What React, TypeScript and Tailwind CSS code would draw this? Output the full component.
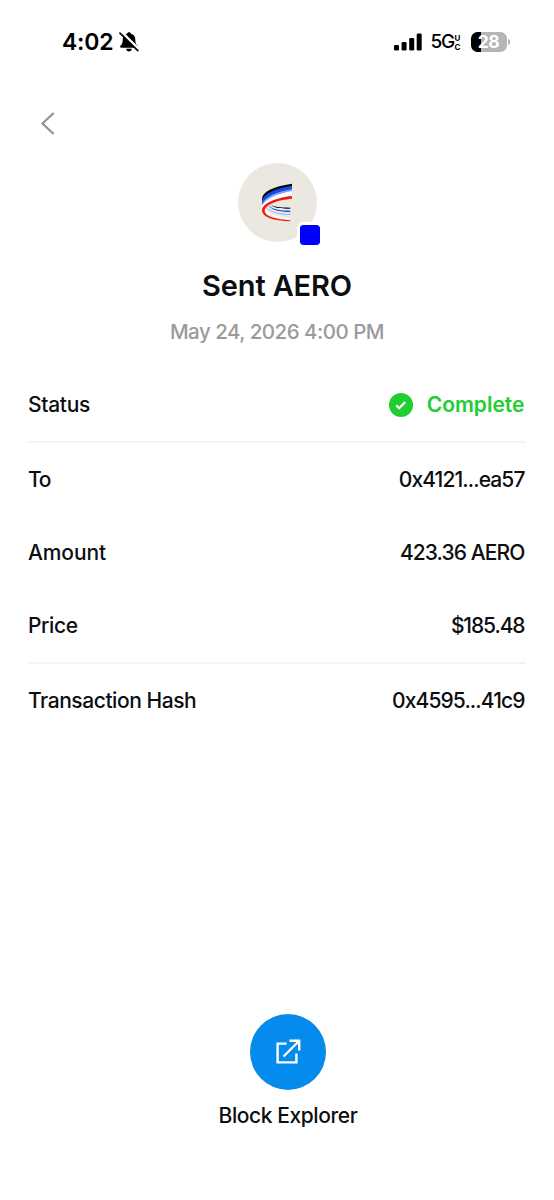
import type { ReactNode } from "react";

function StatusBar() {
  return (
    <header className="flex h-[83px] w-full items-center justify-between pl-[62px] pr-[44px]">
      <div className="flex items-center gap-[5px]">
        <span className="w-[52px] whitespace-nowrap text-[23px] font-semibold leading-7 tracking-[-0.2px] text-black">4:02</span>
        <svg width="20" height="20" viewBox="0 0 20 20">
          <path d="M10 .3c1 0 1.800.6 2 1.500 2.900.8 4.300 2.900 4.300 5.700 0 3.700.7 4.700 2.300 6.300.7.800.2 1.900-.8 1.900H2.200c-1 0-1.500-1.100-.8-1.900C3 12.200 3.700 11.200 3.700 7.500c0-2.800 1.400-4.900 4.300-5.700C8.200.9 9 .3 10 .3ZM7.200 16.700h5.600c-.2 1.700-1.300 2.800-2.800 2.800s-2.600-1.100-2.800-2.800Z" fill="#000" />
          <path d="M2.500.5 20 17.800" stroke="#fff" strokeWidth="3.400" />
          <path d="M1 1.200 18.800 18.600" stroke="#000" strokeWidth="1.700" strokeLinecap="round" />
        </svg>
      </div>
      <div className="flex items-center">
        <svg width="28" height="18" viewBox="0 0 28 18">
          <rect x="0" y="12" width="5" height="5.500" rx="1.300" />
          <rect x="7.600" y="9" width="5" height="8.500" rx="1.300" />
          <rect x="15.200" y="5" width="5" height="12.500" rx="1.300" />
          <rect x="22.700" y="0.500" width="5" height="17" rx="1.300" />
        </svg>
        <span className="ml-[9px] w-[22px] whitespace-nowrap text-[19px] font-medium leading-5 tracking-[-1.200px] text-black">5G</span>
        <span className="ml-[2px] flex w-[7px] flex-col text-[8px] font-bold leading-[10px] text-black">
          <span className="h-[9px]">U</span>
          <span className="h-[9px]">C</span>
        </span>
        <div className="ml-[9px] flex items-center gap-[1.500px]">
          <div className="flex h-5 w-[36px] items-center justify-center overflow-hidden rounded-[6.500px] bg-[linear-gradient(to_right,#000_28%,#b5b5b5_28%)]">
            <span className="text-[17.500px] font-bold leading-5 tracking-[-0.4px] text-white">28</span>
          </div>
          <div className="h-[6px] w-[2px] rounded-r-full bg-[#b5b5b5]" />
        </div>
      </div>
    </header>
  );
}

function TokenIcon() {
  return (
    <div className="relative h-[79px] w-[79px]">
      <svg width="79" height="79" viewBox="39 25 237 237" fill="none">
        <circle cx="157.500" cy="143.500" r="118.500" fill="#ebe8e1" />
        <path d="M111 132C112 112 143 95 201 87V95C151 104 121 119 111 140Z" fill="#05070d" />
        <path d="M111 137C120 116 151 101 201 94V105C153 113 119 130 111 150Z" fill="#174be8" />
        <path d="M112 146C125 126 154 111 201 104V110C154 118 124 132 112 153Z" fill="#7fa1ff" />
        <path d="M112 153C125 132 154 118 201 110V124C154 130 125 143 112 163Z" fill="#fff" />
        <path d="M134 149C147 157 166 159 196 159V162C166 163 146 160 134 149Z" fill="#05070d" />
        <path d="M128 151C143 165 164 168 196 168V172C162 172 140 166 128 151Z" fill="#174be8" />
        <path d="M122 155C136 172 162 178 196 178V181C161 181 133 174 122 155Z" fill="#91afff" />
        <path d="M119 160C128 178 158 187 195 191V194C153 190 121 181 117 165Z" fill="#fff" />
        <path d="M201 124V132C157 136 120 149 119 169C119 184 151 194 196 197V200C145 198 112 187 111 168C111 146 153 129 201 124Z" fill="#f5190c" />
      </svg>
      <div className="absolute left-[59px] top-[59px] h-[26px] w-[26px] rounded-[6px] border-[3px] border-white bg-[#0000fd] bg-clip-padding" />
    </div>
  );
}

function Row({ label, tracking, children }: { label: string; tracking: string; children: ReactNode }) {
  return (
    <div className="flex h-[73px] items-center justify-between whitespace-nowrap pt-px">
      <span className={tracking}>{label}</span>
      <span className="mr-[1.500px] flex items-center">{children}</span>
    </div>
  );
}

export default function App() {
  return (
    <main className="flex h-[1200px] w-[554px] flex-col bg-white font-['Inter',sans-serif] text-[#0c0e10]">
      <StatusBar />
      <nav className="flex h-[80px] items-center pl-[40px]">
        <button aria-label="Back">
          <svg width="16" height="24" viewBox="0 0 16 24" fill="none">
            <path d="M13.700 2 2.500 12.500l11.200 10.500" stroke="#929292" strokeWidth="2.200" />
          </svg>
        </button>
      </nav>
      <section className="flex h-[205px] flex-col items-center">
        <TokenIcon />
        <h1 className="mt-[26px] whitespace-nowrap text-[29px] font-semibold leading-9 tracking-[-0.15px]">Sent AERO</h1>
        <p className="mt-[14px] whitespace-nowrap text-[20.500px] font-medium leading-7 tracking-[-0.5px] text-[#9a9a9a]">May 24, 2026 4:00 PM</p>
      </section>
      <section className="mx-7 text-[21px] font-medium">
        <div className="border-b-2 border-[#f4f4f4]">
          <Row label="Status" tracking="tracking-[-0.3px]">
            <span className="flex items-center gap-[14px] font-semibold text-[#21ce31]">
              <svg width="24" height="24" viewBox="0 0 24 24" fill="none">
                <circle cx="12" cy="12" r="12" fill="#21ce31" />
                <path d="m7.200 12.300 3 3 6-6.200" stroke="#fff" strokeWidth="2.200" />
              </svg>
              <span className="tracking-[0px]">Complete</span>
            </span>
          </Row>
        </div>
        <div className="border-b-2 border-[#f4f4f4]">
          <Row label="To" tracking="tracking-[-1.2px]"><span className="tracking-[-0.9px]">0x4121...ea57</span></Row>
          <Row label="Amount" tracking="tracking-[-0.1px]"><span className="tracking-[-0.9px]">423.36 AERO</span></Row>
          <Row label="Price" tracking="tracking-[-0.4px]"><span className="tracking-[-1.1px]">$185.48</span></Row>
        </div>
        <Row label="Transaction Hash" tracking="tracking-[-0.44px]"><span className="tracking-[-0.9px]">0x4595...41c9</span></Row>
      </section>
      <footer className="mb-[70px] ml-[22px] mt-auto flex flex-col items-center">
        <button aria-label="Open block explorer" className="flex h-[76px] w-[76px] items-center justify-center rounded-full bg-[#058aed]">
          <svg width="26" height="26" viewBox="0 0 26 26" fill="none" stroke="#fff" strokeWidth="2.400">
            <path d="M11.500 4.600H2.600V23.400H21.400V14.500M8.500 17.500 24 2M14.500 1.800H24.200V11.500" />
          </svg>
        </button>
        <span className="mt-[12px] whitespace-nowrap text-[21px] font-medium leading-7 tracking-[-0.42px]">Block Explorer</span>
      </footer>
    </main>
  );
}
